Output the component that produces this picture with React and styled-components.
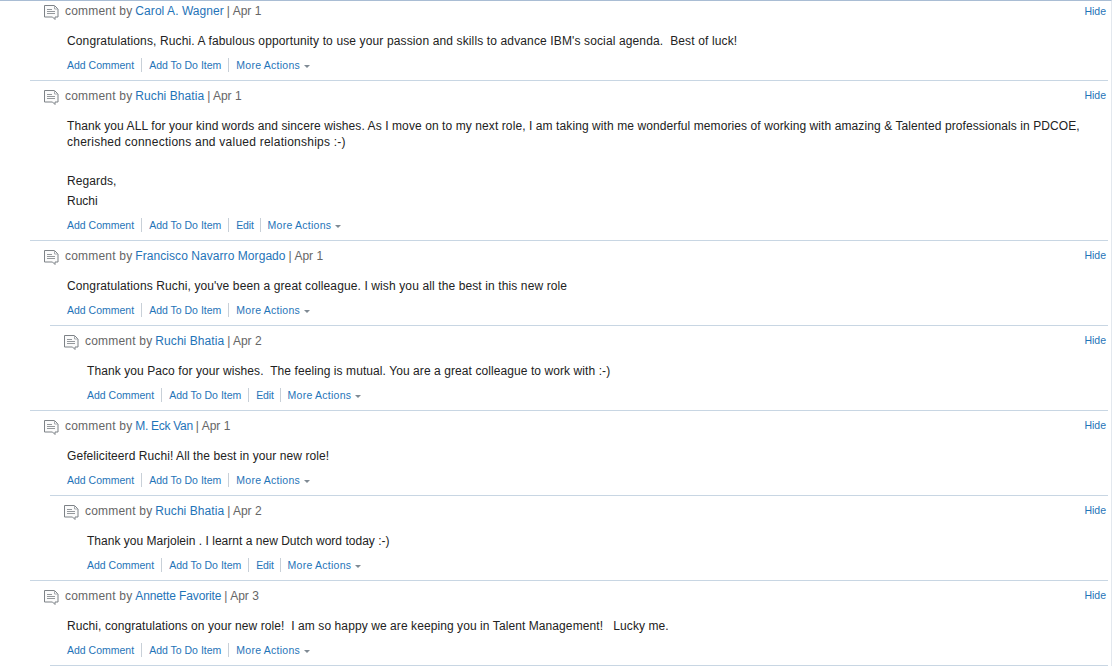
import React from "react";
import styled, { createGlobalStyle } from "styled-components";

const Global = createGlobalStyle`
  html, body { margin: 0; padding: 0; background: #fff; overflow: hidden; }
  body { font-family: "Liberation Sans", Arial, sans-serif; }
`;
const Page = styled.div`
  width: 1112px;
  height: 666px;
  box-sizing: border-box;
  border-top: 1px solid #a9bdd4;
  border-right: 1px solid #e3e8ee;
  padding-left: 30px;
  padding-right: 3px;
  overflow: hidden;
`;
const Row = styled.div`
  position: relative;
  box-sizing: border-box;
  margin-left: ${(p) => (p.$reply ? 20 : 0)}px;
  padding: ${(p) => (p.$first ? 2 : 7)}px 0 7px 14px;
  border-top: ${(p) => (p.$first ? "0" : "1px solid #c8d6e3")};
`;
const NextDivider = styled.div`
  margin-left: 20px;
  border-top: 1px solid #c8d6e3;
`;
const Head = styled.div`
  display: flex;
  align-items: center;
  height: 16px;
  font-size: 12px;
  line-height: 16px;
  color: #666;
`;
const Icon = styled.svg`
  width: 15px;
  height: 15px;
  margin-right: 6px;
  flex: none;
  position: relative;
  top: 1px;
`;
const ByLabel = styled.span`
  letter-spacing: 0.2px;
`;
const Author = styled.a`
  color: #1f74b8;
  margin: 0 3px;
  letter-spacing: ${(p) => p.$track ?? 0.06}px;
`;
const Hide = styled.a`
  position: absolute;
  right: 2px;
  top: ${(p) => (p.$first ? 3 : 7)}px;
  font-size: 10.5px;
  line-height: 14px;
  color: #1f74b8;
`;
const Body = styled.div`
  margin: 14px 0 0 23px;
  font-size: 12px;
  line-height: 16px;
  color: #222;
  white-space: pre-wrap;
`;
const Para = styled.p`
  margin: ${(p) => p.$gap || 0}px 0 0;
  letter-spacing: ${(p) => p.$track}px;
`;
const Actions = styled.ul`
  display: flex;
  align-items: center;
  list-style: none;
  margin: 8px 0 0 23px;
  padding: 0;
  height: 16px;
  font-size: 10.5px;
`;
const Action = styled.li`
  color: #1f74b8;
  line-height: 14px;
  padding: 0 7px;
  border-left: 1px solid #c8d0d8;
  &:first-child { padding-left: 0; border-left: 0; }
`;
const EditAction = styled(Action)`
  padding-right: 6px;
  letter-spacing: -0.2px;
`;
const MoreLabel = styled.span`
  letter-spacing: 0.25px;
`;
const Caret = styled.span`
  display: inline-block;
  margin-left: 4px;
  vertical-align: middle;
  border-left: 3.5px solid transparent;
  border-right: 3.5px solid transparent;
  border-top: 3.5px solid #7f8a94;
`;

const CommentIcon = () => (
  <Icon viewBox="0 0 15 15" fill="none" stroke="#7d8287" strokeWidth="1">
    <path d="M.5 .5h10l3.5 3.5v8h-3v2.5l-2.5-2.5H.5z" fill="#fbfbfb" />
    <path d="M10.5 .5v3.5h3.5" stroke="#a8acb0" />
    <path d="M3 4.5h5M3 6.5h8M3 8.5h8" stroke="#94989c" />
  </Icon>
);

const data = [
  { first: true, by: "Carol A. Wagner", date: "Apr 1", body: [["Congratulations, Ruchi. A fabulous opportunity to use your passion and skills to advance IBM's social agenda.  Best of luck!", 0.131]] },
  { by: "Ruchi Bhatia", date: "Apr 1", edit: true, extra: true, body: [["Thank you ALL for your kind words and sincere wishes. As I move on to my next role, I am taking with me wonderful memories of working with amazing & Talented professionals in PDCOE,", 0.09], ["cherished connections and valued relationships :-)", 0.24]] },
  { by: "Francisco Navarro Morgado", date: "Apr 1", body: [["Congratulations Ruchi, you've been a great colleague. I wish you all the best in this new role", 0.116]] },
  { reply: true, by: "Ruchi Bhatia", date: "Apr 2", edit: true, body: [["Thank you Paco for your wishes.  The feeling is mutual. You are a great colleague to work with :-)", 0.08]] },
  { by: "M. Eck Van", byTrack: -0.3, date: "Apr 1", body: [["Gefeliciteerd Ruchi! All the best in your new role!", 0.08]] },
  { reply: true, by: "Ruchi Bhatia", date: "Apr 2", edit: true, body: [["Thank you Marjolein . I learnt a new Dutch word today :-)", 0.02]] },
  { by: "Annette Favorite", byTrack: -0.13, date: "Apr 3", body: [["Ruchi, congratulations on your new role!  I am so happy we are keeping you in Talent Management!   Lucky me.", 0.083]] },
];

export default function App() {
  return (
    <Page>
      <Global />
      {data.map((c, i) => (
        <Row key={i} $reply={c.reply} $first={c.first}>
          <Head>
            <CommentIcon />
            <ByLabel>comment by</ByLabel>
            <Author $track={c.byTrack}>{c.by}</Author>| {c.date}
          </Head>
          <Hide $first={c.first}>Hide</Hide>
          <Body>
            {c.body.map(([t, track]) => <Para key={t} $track={track}>{t}</Para>)}
            {c.extra && <Para $gap={23} $track={0.1}>Regards,</Para>}
            {c.extra && <Para $gap={4} $track={0}>Ruchi</Para>}
          </Body>
          <Actions>
            <Action>Add Comment</Action>
            <Action>Add To Do Item</Action>
            {c.edit && <EditAction>Edit</EditAction>}
            <Action><MoreLabel>More Actions</MoreLabel><Caret /></Action>
          </Actions>
        </Row>
      ))}
      <NextDivider />
    </Page>
  );
}
